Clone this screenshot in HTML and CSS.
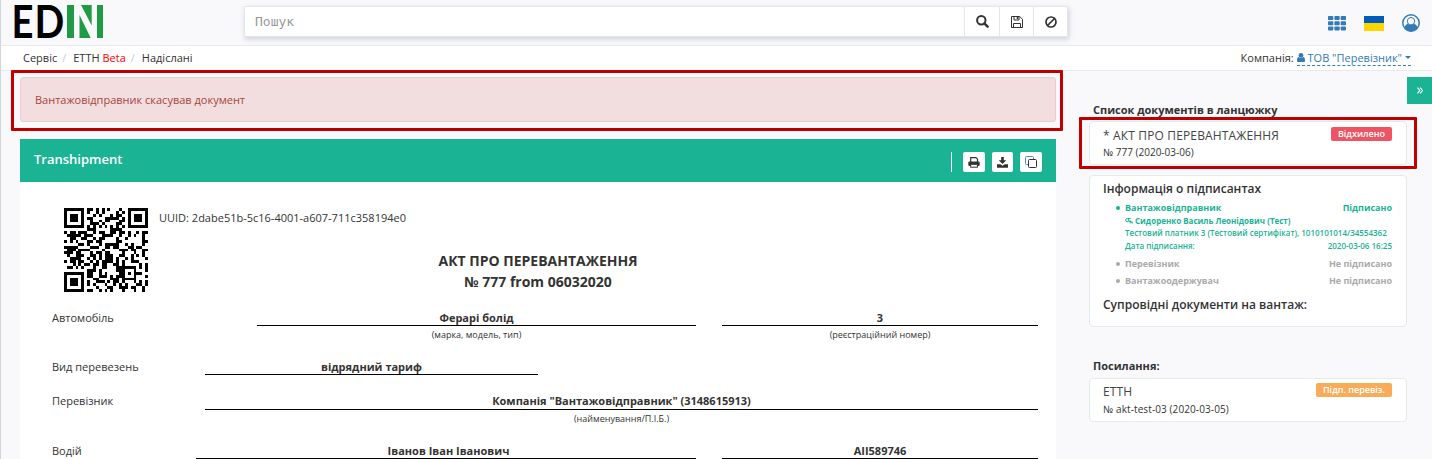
FILE: index.html
```html
<!DOCTYPE html>
<html lang="uk">
<head>
<meta charset="utf-8">
<title>EDIN</title>
<link rel="stylesheet" href="styles.css">
</head>
<body>
<div class="page">
  <header class="topbar">
    <svg class="logo" width="90" height="35" viewBox="0 0 90 35">
      <text class="logo-text" transform="translate(-3.500 34) scale(.83 1)">E</text>
      <text class="logo-text" transform="translate(19.500 34) scale(.85 1)">D</text>
      <g fill="#1f9a45"><rect x="52" y="1" width="7" height="33"/><rect x="82" y="1" width="6" height="33"/><polygon points="66,1 76.7,1 76.7,21.5"/><polygon points="64.5,11 64.5,34 75.7,34"/></g>
    </svg>
    <div class="search">
      <div class="search-input">Пошук</div>
      <div class="search-btn b1"><svg width="13" height="13" viewBox="0 0 13 13" fill="none" stroke="#333" stroke-width="2"><circle cx="5.3" cy="5.2" r="4.2"/><path d="M8.4 8.4l3.2 3.2" stroke-width="2.5" stroke-linecap="round"/></svg></div>
      <div class="search-btn b2"><svg width="12" height="12" viewBox="0 0 12 12" fill="none" stroke="#333"><path d="M.5.5h8.2l2.8 2.8v8.2H.5zM2.5 11V7.500h7V11"/><path d="M3 .5v3.500h5V.5"/><path d="M6.500 1v2" stroke-width="1.500"/></svg></div>
      <div class="search-btn b3"><svg width="12" height="12" viewBox="0 0 12 12" fill="none" stroke="#333" stroke-width="1.700"><circle cx="6" cy="6" r="5"/><path d="M2.500 9.500l7-7"/></svg></div>
    </div>
    <div class="tools">
      <svg width="18" height="15" viewBox="0 0 18 15" fill="#337ab7"><g id="row"><rect width="5.300" height="4" rx=".8"/><rect x="6.400" width="5.300" height="4" rx=".8"/><rect x="12.700" width="5.300" height="4" rx=".8"/></g><use href="#row" y="5.200"/><use href="#row" y="10.400"/></svg>
      <span class="flag"></span>
      <svg width="18" height="18" viewBox="0 0 18 18"><circle cx="9" cy="9" r="8.200" fill="#f9f9fc" stroke="#337ab7" stroke-width="1.500"/><path d="M2.500 14c.4-2.600 1.800-4 3.500-4.200 1.600 1.600 4.400 1.600 6 0 1.700.2 3.100 1.600 3.500 4.200-3.300 4.300-9.700 4.300-13 0z" fill="#337ab7"/><circle cx="9" cy="7.200" r="3.700" fill="#f9f9fc" stroke="#337ab7" stroke-width="1"/></svg>
    </div>
  </header>
  <nav class="crumbs">
    <span>Сервіс</span><i>/</i><span>ЕТТН <b>Beta</b></span><i>/</i><span>Надіслані</span>
    <div class="company">Компанія: <a><svg width="8" height="9" viewBox="0 0 8 9" fill="#337ab7"><circle cx="4" cy="2.400" r="2.400"/><path d="M0 7.500C0 5.500.5 4.200 1.600 4c1.300 1.300 3.500 1.300 4.800 0C7.500 4.200 8 5.500 8 7.500 8 8.500 7.500 9 6.700 9H1.300C.5 9 0 8.500 0 7.500z"/></svg> ТОВ "Перевізник" <span class="caret"></span></a></div>
  </nav>
  <div class="content">
    <main class="main">
      <div class="alert">Вантажовідправник скасував документ<div class="mark mark-alert"></div></div>
      <section class="doc">
        <div class="doc-head"><h1>Transhipment</h1>
          <div class="doc-tools">
            <span><svg width="12" height="11" viewBox="0 0 12 11"><path d="M2.700 5V.7h5.300l1.500 1.500V5" fill="#fff" stroke="#333" stroke-width="1.200"/><rect x=".3" y="4.500" width="11.400" height="4.500" rx="1.200" fill="#333"/><rect x="2.700" y="7.300" width="6.700" height="2.900" fill="#fff" stroke="#333"/></svg></span>
            <span class="mid"><svg width="11" height="11" viewBox="0 0 11 11" fill="#333"><path d="M4.200 0h2.600v3.300h2.500L5.500 7.100 1.700 3.300h2.500z"/><path d="M0 7.200h3.400l2.100 1.500 2.100-1.500H11v3.600H0z"/></svg></span>
            <span><svg width="12" height="12" viewBox="0 0 12 12" fill="none"><path d="M3.500 8.500h-2a1 1 0 0 1-1-1v-6a1 1 0 0 1 1-1h6a1 1 0 0 1 1 1v2" stroke="#4f86bd"/><rect x="3.500" y="3.500" width="8" height="8" rx="1" stroke="#333"/></svg></span>
          </div>
        </div>
        <div class="doc-body">
          <div class="ident"><svg class="qr" width="84" height="84" viewBox="0 0 29 29" shape-rendering="crispEdges"><path id="qr-path"/></svg><p>UUID: 2dabe51b-5c16-4001-a607-711c358194e0</p></div>
          <h2>АКТ ПРО ПЕРЕВАНТАЖЕННЯ<br>№ 777 from 06032020</h2>
          <div class="row vehicle"><span class="label">Автомобіль</span><div class="field"><strong>Ферарі болід</strong><small>(марка, модель, тип)</small></div><div class="field side"><strong>3</strong><small>(реєстраційний номер)</small></div></div>
          <div class="row kind"><span class="label">Вид перевезень</span><div class="field"><strong>відрядний тариф</strong></div></div>
          <div class="row carrier"><span class="label">Перевізник</span><div class="field"><strong>Компанія "Вантажовідправник" (3148615913)</strong><small>(найменування/П.І.Б.)</small></div></div>
          <div class="row driver"><span class="label">Водій</span><div class="field name"><strong>Іванов Іван Іванович</strong></div><div class="field side"><strong>АІІ589746</strong></div></div>
        </div>
      </section>
    </main>
    <aside class="side-panel">
      <div class="toggle"><svg width="6" height="7" viewBox="0 0 6 7" fill="none" stroke="#fff" stroke-width="1.100"><path d="M.5.7l2.300 2.800L.5 6.300M3.200.7l2.300 2.800-2.300 2.800"/></svg></div>
      <h3>Список документів в ланцюжку</h3>
      <div class="card chain"><div class="card-top"><h4>* АКТ ПРО ПЕРЕВАНТАЖЕННЯ</h4><span class="badge red">Відхилено</span></div><p>№ 777 (2020-03-06)</p><div class="mark mark-card"></div></div>
      <div class="card signers">
        <h5>Інформація о підписантах</h5>
        <ul>
          <li class="signed"><div class="who"><span>Вантажовідправник</span><span>Підписано</span></div>
            <div class="person"><svg width="8" height="7" viewBox="0 0 8 7" fill="none" stroke="#1ab394"><circle cx="2.200" cy="3.200" r="1.600"/><path d="M3 1.500h2.500M3.500 4l3.700 1.200M5.300 3.500v3M7.200 4.500v2"/></svg> Сидоренко Василь Леонідович (Тест)</div>
            <div class="cert">Тестовий платник 3 (Тестовий сертифікат), 1010101014/34554362</div>
            <div class="when"><span>Дата підписання:</span><span>2020-03-06 16:25</span></div></li>
          <li><div class="who"><span>Перевізник</span><span>Не підписано</span></div></li>
          <li><div class="who"><span>Вантажоодержувач</span><span>Не підписано</span></div></li>
        </ul>
        <h5>Супровідні документи на вантаж:</h5>
      </div>
      <h3 class="links">Посилання:</h3>
      <div class="card linked"><div class="card-top"><h4>ЕТТН</h4><span class="badge orange">Підп. перевіз.</span></div><p>№ akt-test-03 (2020-03-05)</p></div>
    </aside>
  </div>
</div>
<script src="qr.js"></script>
</body>
</html>
```
FILE: styles.css
```css
* { box-sizing: border-box; }
body { margin: 0; background: #f9f9fc; color: #333; font: 11px/15px "Open Sans", sans-serif; }
h1, h2, h3, h4, h5, p, ul { margin: 0; padding: 0; }
svg { display: block; }
.page { height: 459px; overflow: hidden; border-left: 1px solid #d3d4d8; display: flex; flex-direction: column; }
.topbar { height: 46px; flex: none; border-bottom: 1px solid #e7eaec; display: flex; align-items: flex-start; }
.logo { margin: 4px 0 0 14px; flex: none; overflow: visible; }
.logo-text { font: 700 46px Lato, sans-serif; fill: #000; }
.search { display: flex; margin: 6px 0 0 139px; width: 824px; height: 31px; background: #fff; border: 1px solid #e5e6e7; box-shadow: 1px 2px 5px rgba(70, 80, 120, .25); }
.search-input { width: 719px; padding: 7px 10px; color: #999; font: 13px/16px "DejaVu Sans Mono", monospace; }
.search-btn { display: flex; align-items: center; justify-content: center; border-left: 1px solid #e5e6e7; }
.b1 { width: 35px; }
.b2 { width: 34px; }
.b3 { width: 34px; }
.tools { margin: 14px 12px 0 auto; display: flex; align-items: center; gap: 18px; height: 18px; }
.flag { width: 20px; height: 15px; background: linear-gradient(#005bbb 50%, #ffd500 50%); }
.crumbs { height: 25px; flex: none; display: flex; align-items: center; padding: 0 21px 1px 22px; background: #fff; border-bottom: 1px solid #e7eaec; }
.crumbs i { color: #ccc; font-style: normal; margin: 0 7px 0 5px; }
.crumbs b { color: #f00; font-weight: 400; }
.company { margin-left: auto; }
.company a { display: inline-flex; align-items: center; gap: 3px; height: 16px; color: #337ab7; border-bottom: 1px dashed #337ab7; }
.caret { border: 3px solid transparent; border-top-color: #337ab7; border-bottom: 0; }
.content { display: flex; align-items: flex-start; padding-left: 19px; }
.main { width: 1036px; padding-top: 6px; }
.alert { position: relative; height: 45px; padding: 14px; border: 1px solid #ebccd1; border-radius: 3px; background: #f2dede; color: #a94442; }
.mark { position: absolute; border: 3px solid #c00000; border-radius: 1px; }
.mark-alert { inset: -8px -8px -10px -10px; }
.mark-card { inset: -5px -11px -5px -11px; }
.doc { margin-top: 17px; background: #fff; }
.doc-head { height: 43px; padding: 0 14px; display: flex; justify-content: space-between; align-items: center; background: #1ab394; color: #fff; }
.doc-head h1 { font-size: 13px; font-weight: 600; line-height: 18px; padding-bottom: 4px; }
.doc-tools { display: flex; gap: 7px; margin-top: 3px; padding-left: 11px; border-left: 1px solid #fff; }
.doc-tools span { width: 22px; height: 20px; display: flex; align-items: center; justify-content: center; background: #fff; border-radius: 2px; }
.doc-tools .mid { width: 21px; }
.doc-body { padding: 26px 18px 0 32px; }
.ident { display: flex; height: 42px; padding-left: 12px; }
.ident p { margin: 2px 0 0 11px; }
.qr { flex: none; }
.doc-body h2 { font-size: 14px; line-height: 21px; font-weight: 700; text-align: center; margin-left: -14px; }
.row { display: flex; }
.field { display: flex; flex-direction: column; text-align: center; flex: 1; }
.field strong { height: 16px; border-bottom: 1px solid #000; }
.field small { font-size: 9px; line-height: 12px; padding-top: 3px; }
.label { flex: none; width: 153px; }
.side { flex: 0 0 316px; margin-left: 26px; }
.vehicle { margin-top: 18px; height: 49px; }
.vehicle .label { width: 205px; }
.kind { height: 34px; }
.kind .field { flex: 0 0 333px; }
.carrier { height: 50px; }
.carrier strong { height: 17px; }
.driver .label { width: 144px; }
.driver .name strong { padding-left: 5px; }
.side-panel { position: relative; width: 342px; padding: 31px 24px 0 0; margin-left: 33px; }
.toggle { position: absolute; right: -1px; top: 6px; width: 25px; height: 27px; display: flex; align-items: center; justify-content: center; background: #1ab394; }
.side-panel h3 { font-size: 11px; line-height: 15px; padding-left: 4px; margin-bottom: 4px; }
.side-panel h3.links { margin-top: 31px; margin-bottom: 5px; }
.card { position: relative; border: 1px solid #e7eaec; border-radius: 4px; background: #fff; padding: 5px 14px 0 13px; height: 44px; }
.chain { padding-top: 6px; }
.card-top { display: flex; justify-content: space-between; align-items: flex-start; }
.card h4 { font-size: 12px; line-height: 16px; font-weight: 500; color: #444; letter-spacing: .15px; }
.card p { font-size: 10px; line-height: 14px; padding-top: 2px; }
.card.chain p { padding-top: 1px; }
.linked p { letter-spacing: .1px; }
.badge { height: 14px; padding: 0 7px; margin-top: -1px; border-radius: 2px; color: #fff; font-size: 9px; line-height: 14px; font-weight: 600; }
.red { background: #ed5565; }
.orange { background: #f8ac59; }
.signers { height: 152px; margin-top: 10px; padding-top: 4px; }
.signers h5 { font-size: 12px; line-height: 17px; font-weight: 600; }
.signers ul { list-style: none; padding: 5px 0 4px 22px; font-size: 8px; line-height: 12px; }
.signers li { position: relative; color: #aaa; height: 17px; }
.signers li::before { content: ""; position: absolute; left: -9px; top: 4px; width: 4px; height: 4px; border-radius: 50%; background: currentColor; }
.signers .signed { color: #1ab394; height: 56px; }
.who, .when { display: flex; justify-content: space-between; }
.who { font-size: 9px; font-weight: 700; }
.person { display: flex; align-items: center; gap: 2px; font-weight: 700; height: 13px; }
.cert, .when { font-weight: 600; }
.cert { white-space: nowrap; height: 13px; }
```
FILE: qr.js
```js
// QR code, version 3 (29x29), level M, mask 3.
const SIZE = 29, DATA = 44, EC = 26, FORMAT = 0b101101101001011;

function mul(a, b) {
  let r = 0;
  for (; b; b >>= 1) { if (b & 1) r ^= a; a <<= 1; if (a & 256) a ^= 0x11d; }
  return r;
}

function remainder(data, n) {
  let gen = [1], root = 1;
  for (let i = 0; i < n; i++) {
    const next = new Array(gen.length + 1).fill(0);
    gen.forEach((g, j) => { next[j] ^= g; next[j + 1] ^= mul(g, root); });
    gen = next;
    root = mul(root, 2);
  }
  const res = data.concat(new Array(n).fill(0));
  for (let i = 0; i < data.length; i++) {
    const f = res[i];
    gen.forEach((g, j) => { res[i + j] ^= mul(g, f); });
  }
  return res.slice(data.length);
}

function build(text) {
  let bits = '0100' + text.length.toString(2).padStart(8, '0');
  for (const c of text) bits += c.charCodeAt(0).toString(2).padStart(8, '0');
  bits += '0000';
  const data = bits.match(/.{8}/g).map(b => parseInt(b, 2));
  for (let p = 0xec; data.length < DATA; p ^= 0xec ^ 0x11) data.push(p);
  const stream = data.concat(remainder(data, EC));
  const m = Array.from({ length: SIZE }, () => new Array(SIZE).fill(null));
  const set = (x, y, v) => { if (x >= 0 && y >= 0 && x < SIZE && y < SIZE) m[y][x] = v ? 1 : 0; };
  const square = (cx, cy, r, light) => {
    for (let dy = -r; dy <= r; dy++) for (let dx = -r; dx <= r; dx++)
      set(cx + dx, cy + dy, !light.includes(Math.max(Math.abs(dx), Math.abs(dy))));
  };
  for (let i = 0; i < SIZE; i++) { set(i, 6, i % 2 === 0); set(6, i, i % 2 === 0); }
  square(3, 3, 4, [2, 4]);
  square(SIZE - 4, 3, 4, [2, 4]);
  square(3, SIZE - 4, 4, [2, 4]);
  square(22, 22, 2, [1]);
  const b = i => (FORMAT >> i) & 1;
  for (let i = 0; i < 6; i++) set(8, i, b(i));
  set(8, 7, b(6)); set(8, 8, b(7)); set(7, 8, b(8));
  for (let i = 9; i < 15; i++) set(14 - i, 8, b(i));
  for (let i = 0; i < 8; i++) set(SIZE - 1 - i, 8, b(i));
  for (let i = 8; i < 15; i++) set(8, SIZE - 15 + i, b(i));
  set(8, SIZE - 8, 1);
  let k = 0;
  for (let right = SIZE - 1; right >= 1; right -= 2) {
    if (right === 6) right = 5;
    for (let v = 0; v < SIZE; v++) for (let j = 0; j < 2; j++) {
      const x = right - j, y = ((right + 1) & 2) === 0 ? SIZE - 1 - v : v;
      if (m[y][x] !== null) continue;
      const bit = k < stream.length * 8 ? (stream[k >> 3] >> (7 - (k & 7))) & 1 : 0;
      k++;
      m[y][x] = bit ^ ((x + y) % 3 === 0 ? 1 : 0);
    }
  }
  return m;
}

let path = '';
build('2DABE51B-5C16-4001-A607-711C358194E0').forEach((row, y) => row.forEach((v, x) => {
  if (v) path += `M${x} ${y}h1v1h-1z`;
}));
document.getElementById('qr-path').setAttribute('d', path);
```
